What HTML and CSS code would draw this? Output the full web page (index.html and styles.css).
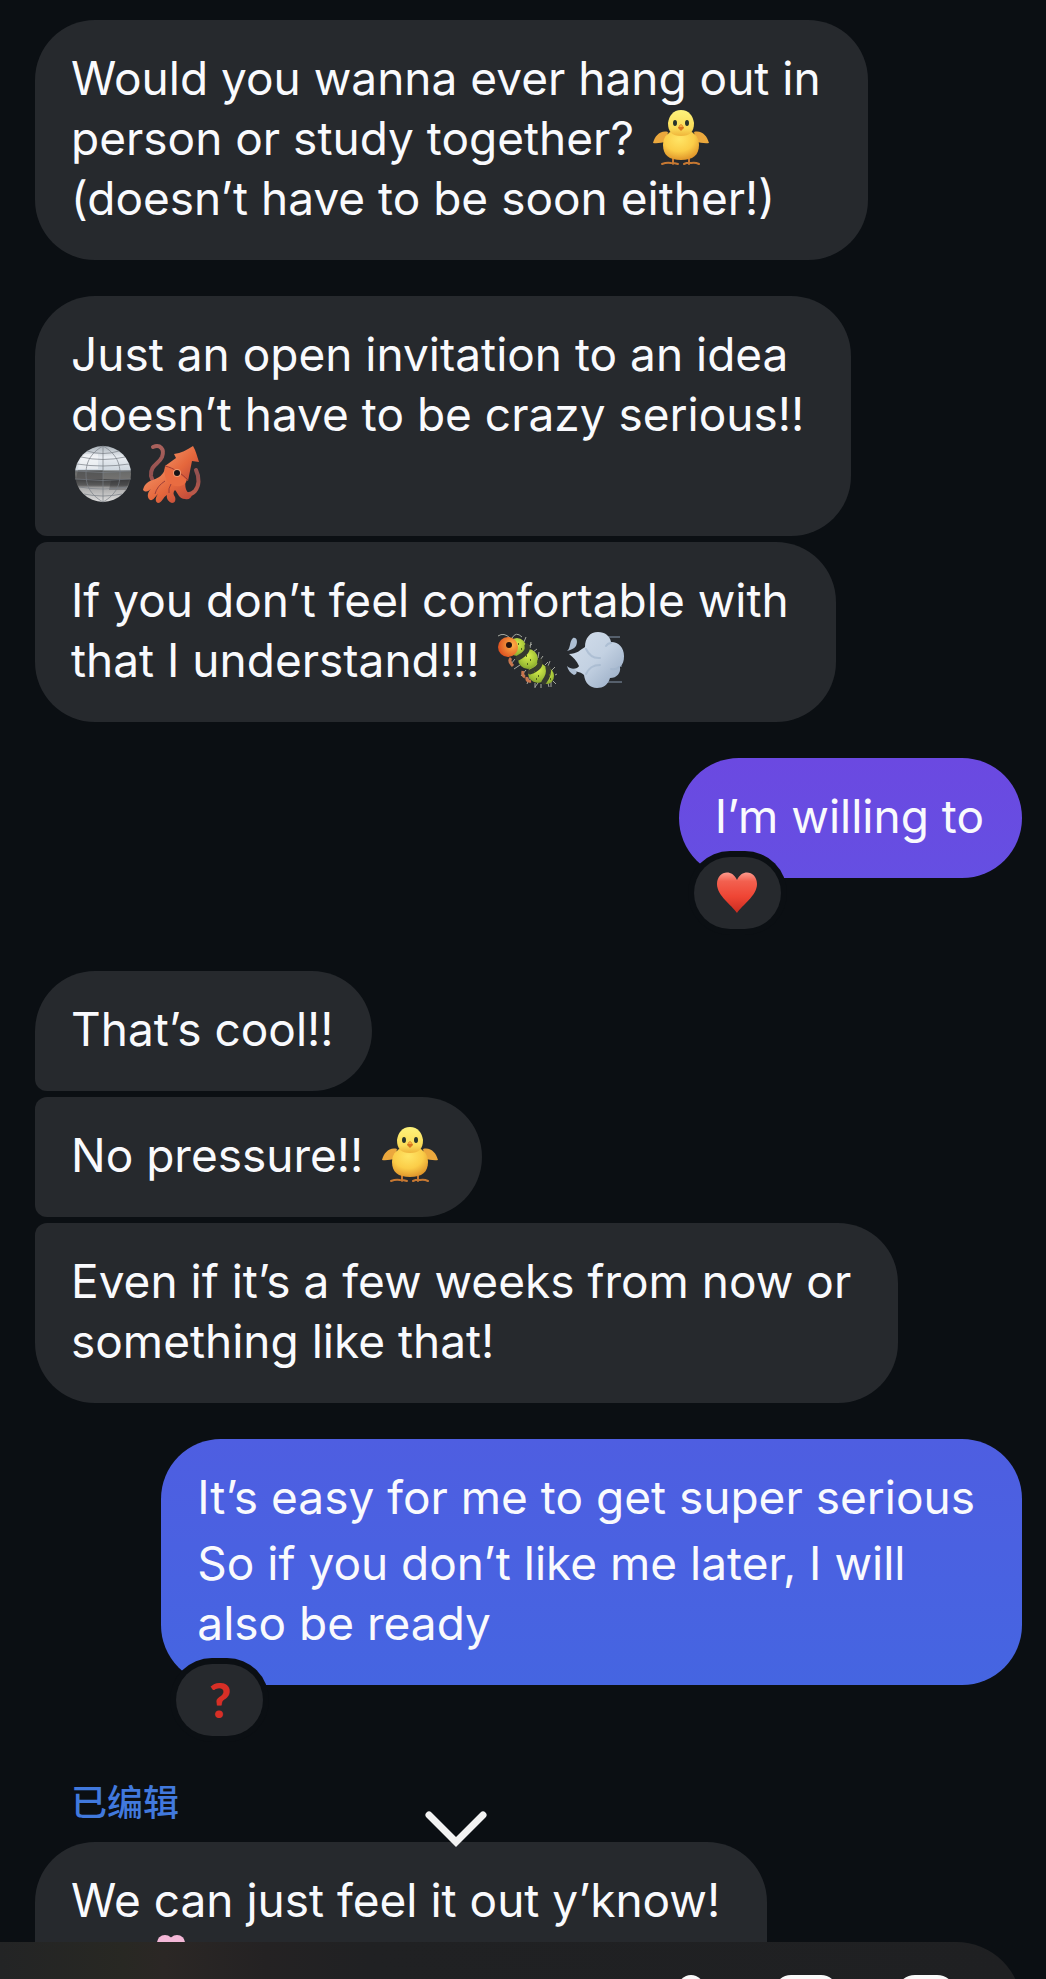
FILE: index.html
```html
<!DOCTYPE html>
<html lang="en">
<head>
<meta charset="utf-8">
<meta name="viewport" content="width=device-width, initial-scale=1">
<title>Chat</title>
<link rel="stylesheet" href="styles.css">
</head>
<body>
<svg class="sprites" aria-hidden="true">
  <defs>
    <radialGradient id="chick-body" cx=".45" cy=".3" r=".75"><stop offset="0" stop-color="#ffe566"/><stop offset=".55" stop-color="#fbcd48"/><stop offset="1" stop-color="#dc8d26"/></radialGradient>
    <linearGradient id="chick-head" x1="0" y1="0" x2="0" y2="1"><stop offset="0" stop-color="#fdf27c"/><stop offset=".7" stop-color="#fbdc58"/><stop offset="1" stop-color="#efb43a"/></linearGradient>
    <linearGradient id="ball" x1="0" y1="0" x2="0" y2="1"><stop offset="0" stop-color="#a9b1b8"/><stop offset=".2" stop-color="#e9edf2"/><stop offset=".42" stop-color="#cfd7df"/><stop offset=".45" stop-color="#686a69"/><stop offset=".58" stop-color="#737270"/><stop offset=".6" stop-color="#424344"/><stop offset=".7" stop-color="#5b5b5b"/><stop offset=".75" stop-color="#aaa"/><stop offset="1" stop-color="#dedede"/></linearGradient>
    <linearGradient id="squid" x1="0" y1="0" x2="1" y2="1"><stop offset="0" stop-color="#f39569"/><stop offset=".55" stop-color="#e5673c"/><stop offset="1" stop-color="#b8443b"/></linearGradient>
    <linearGradient id="squid-arm" x1="0" y1="0" x2="0" y2="1"><stop offset="0" stop-color="#a9615c"/><stop offset=".6" stop-color="#94504f"/><stop offset="1" stop-color="#bc5a4a"/></linearGradient>
    <radialGradient id="bug-head" cx=".7" cy=".4" r=".7"><stop offset="0" stop-color="#ffb347"/><stop offset="1" stop-color="#dd5120"/></radialGradient>
    <radialGradient id="bug" cx=".5" cy=".35" r=".7"><stop offset="0" stop-color="#d8f04c"/><stop offset=".7" stop-color="#9dbd35"/><stop offset="1" stop-color="#7f9c2c"/></radialGradient>
    <linearGradient id="puff" x1="0" y1="0" x2="1" y2="1"><stop offset="0" stop-color="#d3deeb"/><stop offset=".5" stop-color="#c3d1e2"/><stop offset="1" stop-color="#93a7c1"/></linearGradient>
    <linearGradient id="heart" x1="0" y1="0" x2="0" y2="1"><stop offset="0" stop-color="#ff9b8d"/><stop offset=".22" stop-color="#f2604f"/><stop offset=".6" stop-color="#ef4534"/><stop offset="1" stop-color="#c92c20"/></linearGradient>
  </defs>
  <symbol id="chick" viewBox="0 0 56 56">
    <path d="M20 48v6M36 48v6M9 54q5-2 9-1 4 0 7 1M31 54q4-2 7-1 4-1 8 1" fill="none" stroke="#c67832" stroke-width="2" stroke-linecap="round"/>
    <path d="M15 22C7 20 2 26 0 33c5 1 9-1 13-1zM41 22c8-2 13 4 15 11-5 1-9-1-13-1z" fill="#eba83d"/>
    <path d="M28 20c12 0 18 6 18 15 0 10-6 15-18 15s-18-5-18-15c0-9 6-15 18-15z" fill="url(#chick-body)"/>
    <path d="M28 0c8 0 12 6 13 13 0 9-4 13-13 13s-13-4-13-13C16 6 20 0 28 0z" fill="url(#chick-head)"/>
    <ellipse cx="22" cy="13" rx="2" ry="3" fill="#28342c"/><ellipse cx="34" cy="13" rx="2" ry="3" fill="#28342c"/>
    <path d="M28 14c2 2 3 3 3 4l-3 3-3-3c0-1 1-2 3-4z" fill="#d9771f"/><path d="M28 14l2 3h-4z" fill="#f6aa3e"/>
  </symbol>
</svg>
<main class="thread">
  <ol class="messages">
    <li class="message"><p class="bubble wrapped">Would you wanna ever hang out in<br>person or study together? <svg class="emoji" role="img" aria-label="chick"><use href="#chick"/></svg><br>(doesn’t have to be soon either!)</p></li>
    <li class="message"><p class="bubble wrapped joins-below">Just an open invitation to an idea<br>doesn’t have to be crazy serious!!<br><svg class="emoji lead" viewBox="0 0 56 56" role="img" aria-label="mirror ball"><circle cx="28" cy="28" r="28" fill="url(#ball)"/><path d="M3 24h25v9H1zM36 34h18l-3 10H34z" fill="#303233" opacity=".35"/><path d="M10 8h13v15H3C4 16 6 12 10 8z" fill="#fff" opacity=".45"/><path d="M28 0v56M28 0C14 8 11 18 11 28s3 20 17 28M28 0c14 8 17 18 17 28s-3 20-17 28M12 5q16 5 32 0M6 11q22 5 44 0M2 18q26 4 52 0M0 25q28 3 56 0M0 33q28 3 56 0M4 41q24 4 48 0M9 48q19 4 38 0" fill="none" stroke="#777d84" stroke-width="1" opacity=".7"/></svg><svg class="emoji" viewBox="0 0 56 56" role="img" aria-label="squid"><path d="M10 1c7-3 12 2 9 10-3 7-12 8-11 19 1 6 6 8 12 8M53 24c4 8 3 16-1 21-4 4-9 4-14 1" fill="none" stroke="url(#squid-arm)" stroke-width="4" stroke-linecap="round"/><path d="M22 22c-1 7-7 10-12 12-7 2-9 6-10 10 3 3 6 1 9-2-4 3-6 9-2 12 3 1 5-3 8-6-3 4-3 8 0 9 4 0 5-6 9-8-1 4 2 7 5 8 3 0 4-3 3-6-2-3-2-5 0-7 3 3 4 9 10 9 4 1 6-1 7-4-6-2-8-8-6-16z" fill="url(#squid)"/><path d="M22 20c10-1 18 5 22 13-1 6-6 8-12 7-8-1-12-10-10-20z" fill="#e96c41"/><path d="M22 20l11-8-2-4C38 7 44 4 50 0c3 5 4 10 6 16l-7-1-4 20C38 29 31 23 22 20z" fill="url(#squid)"/><path d="M22 20c9 2 17 8 23 14" fill="none" stroke="#9e3a30" stroke-width="1"/><circle cx="34" cy="27" r="4" fill="#f09a72"/><circle cx="34" cy="27" r="3" fill="#171416"/><path d="M22 35q-8 5-10 13M28 38q-3 5-2 9" fill="none" stroke="#9d3f39" stroke-width="1"/></svg></p></li>
    <li class="message tight"><p class="bubble wrapped joins-above">If you don’t feel comfortable with<br>that I understand!!! <svg class="emoji" viewBox="0 0 56 56" role="img" aria-label="bug"><path d="M12 6Q6 0 0 4M14 6Q18-1 24 5M30 15l4-3M35 20l4-3M42 28l3-4M47 33l3-3M50 34l2-5M54 38l3-3M57 43l2-1M55 49l3 3M50 51l1 4M43 52v4M37 51v5M32 44l-3 8M28 38l-5 6M22 33l-6 4M17 27l-4 5M26 10l2-5M32 16l1-6M40 26l1-6M40 51l-3 4M53 50v5" fill="none" stroke="#a4a79e" stroke-width="1"/><path d="M13 26q-3 3 2 8M25 39q-1 5 2 6M29 45q-1 5 4 4" fill="none" stroke="#c7764e" stroke-width="3"/><circle cx="19" cy="15" r="9" fill="url(#bug)"/><ellipse cx="49" cy="44" rx="7" ry="8" fill="url(#bug)"/><circle cx="40" cy="41" r="10" fill="url(#bug)"/><circle cx="30" cy="27" r="10" fill="url(#bug)"/><path d="M29 14q2 6-9 12M42 29q1 7-10 11M50 36q2 6-4 14" fill="none" stroke="#363a2f" stroke-width="5" stroke-linecap="round"/><circle cx="10" cy="15" r="10" fill="url(#bug-head)"/><circle cx="11" cy="13" r="3" fill="#25130f"/><path d="M28 24h1M32 28h1M29 32h1M36 40h1M40 44h1M38 47h1M51 43h1M52 47h1M20 12h1M23 17h1" stroke="#53641c" stroke-width="2"/></svg><svg class="emoji" viewBox="0 0 56 56" role="img" aria-label="dash"><path d="M38 5h16M44 34h12M38 50h18" stroke="#8597ac" stroke-width="1"/><path d="M3 22c8 0 11-4 16-7C19 6 24 0 32 0c7 0 12 4 13 10 8 0 13 6 13 14 0 5-1 8-4 11 1 6-3 11-10 11-2 7-7 10-13 10-7 0-12-5-13-13-4-4-9-3-14-6 6 0 8-1 9-3-2-5-6-9-10-12z" fill="url(#puff)"/><path d="M20 17q5 10 14 9M20 42q4-9 14-9M45 11q-3 0-5 3M53 35q-3 3-8 2" fill="none" stroke="#9fb2c9" stroke-width="2" stroke-linecap="round" opacity=".6"/><path d="M7 6c4-1 5 4 3 8-2 3-6 4-9 5 4-3 2-9 6-13zM8 43c4-1 3-5 0-6-3-1-5-1-7-3 1 4 3 7 7 9z" fill="#aebfd3"/></svg></p></li>
    <li class="message sent reacted"><div class="bubble violet"><p>I’m willing to</p><button class="reaction" type="button" aria-label="Heart reaction"><svg class="heart" viewBox="0 0 42 42"><path d="M21 41C16 33 1 24 1 12 1-1 16-4 21 8 26-4 41-1 41 12 41 24 26 33 21 41z" fill="url(#heart)"/></svg></button></div></li>
    <li class="message"><p class="bubble joins-below">That’s cool!!</p></li>
    <li class="message tight"><p class="bubble joins-above joins-below">No pressure!! <svg class="emoji" role="img" aria-label="chick"><use href="#chick"/></svg></p></li>
    <li class="message tight"><p class="bubble wrapped joins-above">Even if it’s a few weeks from now or<br>something like that!</p></li>
    <li class="message sent reacted"><div class="bubble blue wrapped"><p>It’s easy for me to get super serious</p><p class="paragraph">So if you don’t like me later, I will<br>also be ready</p><button class="reaction" type="button" aria-label="Question reaction">?</button></div></li>
    <li class="message edited"><span class="note" lang="zh-CN">已编辑</span><p class="bubble wrapped">We can just feel it out y’know!<br><svg class="emoji lead" viewBox="0 0 56 56" aria-hidden="true"><path d="M28 54V30M28 40q-14 2-16-12 14 0 16 12zM28 36q2-14 16-12 0 12-16 12z" fill="#6aa346" stroke="#5a8c3a"/></svg><svg class="emoji" viewBox="0 0 56 56" role="img" aria-label="blossom"><g fill="#f4b8d8"><circle cx="22" cy="11" r="8"/><circle cx="34" cy="11" r="8"/><circle cx="44" cy="28" r="10"/><circle cx="28" cy="42" r="11"/><circle cx="12" cy="28" r="10"/><circle cx="28" cy="22" r="12"/></g><circle cx="28" cy="27" r="8" fill="#e4659e"/></svg></p></li>
  </ol>
  <button class="jump" type="button" aria-label="Jump to latest"><svg viewBox="0 0 62 36"><path d="M4 4l27 27L58 4" fill="none" stroke="#f3f3f3" stroke-width="7" stroke-linecap="round"/></svg></button>
</main>
<footer class="composer">
  <div class="bar">
    <button type="button" aria-label="Voice message"><svg class="mic" viewBox="0 0 26 60"><rect width="26" height="40" rx="13" fill="#fafafa"/></svg></button>
    <button type="button" aria-label="Photo"><svg class="photo" viewBox="0 0 64 60"><rect x="3" y="3" width="58" height="54" rx="14" fill="none" stroke="#fafafa" stroke-width="6"/></svg></button>
    <button type="button" aria-label="Sticker"><svg class="sticker" viewBox="0 0 60 60"><rect x="3" y="3" width="54" height="54" rx="16" fill="none" stroke="#fafafa" stroke-width="6"/></svg></button>
  </div>
</footer>
</body>
</html>
```
FILE: styles.css
```css
:root {
  --page: #0b0f13;
  --received: #26292d;
}

* {
  box-sizing: border-box;
}

body {
  margin: 0;
  height: 100vh;
  display: flex;
  flex-direction: column;
  overflow: hidden;
  background: var(--page);
  color: #f9fafd;
  font-family: Inter, "Noto Sans CJK SC", sans-serif;
  font-size: 46px;
  line-height: 60px;
}

button {
  border: 0;
  padding: 0;
  background: none;
  color: inherit;
  font: inherit;
}

svg {
  display: block;
}

p {
  margin: 0;
}

.sprites {
  position: absolute;
  width: 0;
  height: 0;
}

.thread {
  position: relative;
  flex: 1;
  min-height: 0;
  overflow: hidden;
}

.messages {
  display: flex;
  flex-direction: column;
  margin: 0;
  padding: 20px 24px 0 35px;
  list-style: none;
}

.message {
  display: flex;
  flex-direction: column;
  align-items: flex-start;
  margin-bottom: 36px;
}

.message:has(+ .tight) {
  margin-bottom: 6px;
}

.sent {
  align-items: flex-end;
}

.reacted {
  margin-bottom: 93px;
}

.bubble {
  position: relative;
  padding: 28px 38px 32px 36px;
  border-radius: 60px;
  background: var(--received);
}

.wrapped {
  padding-right: 47px;
}

.joins-below {
  border-bottom-left-radius: 12px;
}

.joins-above {
  border-top-left-radius: 12px;
}

.violet {
  background: linear-gradient(#6b49e1, #654fe2);
}

.blue {
  background: linear-gradient(#4e5ee1, #4565e1);
}

.paragraph {
  margin-top: 6px;
}

.emoji {
  display: inline-block;
  width: 56px;
  height: 56px;
  margin: 2px 6px 0;
  vertical-align: top;
  overflow: visible;
}

.lead {
  margin-left: 4px;
}

.reaction {
  position: absolute;
  left: 15px;
  bottom: -51px;
  display: grid;
  place-items: center;
  width: 87px;
  height: 72px;
  border-radius: 36px;
  background: var(--received);
  box-shadow: 0 0 0 6px var(--page);
  color: #d72f26;
  font-family: Lato, sans-serif;
  font-size: 48px;
  font-weight: 900;
}

.heart {
  width: 42px;
  height: 42px;
}

.note {
  margin: 0 0 20px 36px;
  color: #4179dd;
  font-family: "Noto Sans CJK SC", sans-serif;
  font-size: 36px;
  font-weight: 500;
  line-height: 44px;
}

.jump {
  position: absolute;
  left: 425px;
  bottom: 95px;
}

.jump svg {
  width: 62px;
  height: 36px;
}

.composer {
  flex: none;
  height: 37px;
  overflow: hidden;
}

.bar {
  display: flex;
  justify-content: flex-end;
  align-items: flex-start;
  height: 132px;
  margin-right: 24px;
  padding: 33px 66px 0 0;
  border-radius: 0 66px 66px 0;
  background: linear-gradient(90deg, #232425, #282823 12%, #2b2725 16%, #242223 26%, #202123 36%, #1f2022);
}

.mic {
  width: 26px;
  height: 60px;
  margin-right: 70px;
}

.photo {
  width: 64px;
  height: 60px;
  margin-right: 58px;
}

.sticker {
  width: 60px;
  height: 60px;
}
```
